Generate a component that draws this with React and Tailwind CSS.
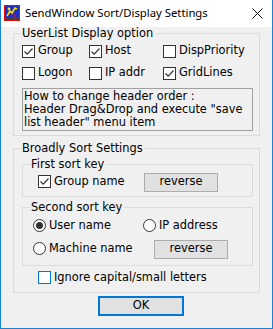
function Check({ checked, focus }) {
  return (
    <span
      className={`w-[13px] h-[13px] shrink-0 border bg-white flex items-center justify-center ${
        focus ? 'border-[#0078d7]' : 'border-[#333333]'
      }`}
    >
      {checked && (
        <svg viewBox="0 0 11 11" className="w-[11px] h-[11px]">
          <path d="M1.5 5.5 L4.2 8.2 L9.5 2.5" stroke="#333" strokeWidth="1.2" fill="none" />
        </svg>
      )}
    </span>
  )
}

function Radio({ checked }) {
  return (
    <span className="w-[13px] h-[13px] shrink-0 rounded-full border border-[#333333] bg-white flex items-center justify-center">
      {checked && <span className="w-[7px] h-[7px] rounded-full bg-[#333333]" />}
    </span>
  )
}

function Option({ label, checked, className = '' }) {
  return (
    <div className={`flex items-center gap-[3px] ${className}`}>
      <Check checked={checked} />
      <span>{label}</span>
    </div>
  )
}

function Button({ children }) {
  return (
    <button className="w-[74px] h-[19px] bg-[#e1e1e1] border border-[#adadad] leading-none">
      {children}
    </button>
  )
}

function AppIcon() {
  return (
    <svg viewBox="0 0 16 16" className="w-4 h-4 shrink-0">
      <rect x="0.5" y="0.5" width="15" height="15" fill="#1c2fc8" stroke="#e01010" />
      <rect x="1" y="12" width="14" height="3" fill="#404040" />
      <path d="M3 11 L6 6 L8 8 L11 3 L13 4" stroke="#ffe000" strokeWidth="1.6" fill="none" />
      <circle cx="5" cy="4" r="1.4" fill="#ffe000" />
      <path d="M9 9 L12 12" stroke="#e01010" strokeWidth="1.4" />
    </svg>
  )
}

export default function App() {
  return (
    <div className="w-[273px] h-[329px] bg-[#f0f0f0] border-x border-b border-[#1883d7] flex flex-col font-['DejaVu_Sans',sans-serif] text-[11.4px] text-black">
      <div className="h-[27px] shrink-0 bg-white flex items-start">
        <div className="ml-[3px] mt-[5px]">
          <AppIcon />
        </div>
        <span className="ml-[5px] mt-[6px] text-[11.3px] leading-[14px] font-['Noto_Sans',sans-serif]">
          SendWindow Sort/Display Settings
        </span>
        <svg viewBox="0 0 11 11" className="ml-auto mr-[9px] mt-[8px] w-[11px] h-[11px]">
          <path d="M0.5 0.5 L10.5 10.5 M10.5 0.5 L0.5 10.5" stroke="#111" strokeWidth="1" />
        </svg>
      </div>

      <fieldset className="ml-[12px] w-[247px] border border-[#dcdcdc] pl-[8px] pr-[6px] pb-[4px]">
        <legend className="leading-[13px] pr-[2px]">UserList Display option</legend>
        <div className="grid grid-cols-[67px_74px_1fr]">
          <Option className="h-[22px]" label="Group" checked />
          <Option className="h-[22px]" label="Host" checked />
          <Option className="h-[22px]" label="DispPriority" />
          <Option className="h-[22px]" label="Logon" />
          <Option className="h-[22px]" label="IP addr" />
          <Option className="h-[22px]" label="GridLines" checked />
        </div>
        <div className="mt-[4px] h-[43px] border border-[#a0a0a0] pl-[1px] pt-[1px] leading-[13px] whitespace-nowrap">
          How to change header order :<br />
          Header Drag&amp;Drop and execute "save<br />
          list header" menu item
        </div>
      </fieldset>

      <fieldset className="mt-[6px] ml-[12px] w-[247px] border border-[#dcdcdc] pl-[8px] pr-[6px] pb-[3px]">
        <legend className="leading-[13px] pr-[2px]">Broadly Sort Settings</legend>

        <fieldset className="mt-[3px] w-[231px] border border-[#dcdcdc] pl-[8px] pb-[3px]">
          <legend className="leading-[13px] pr-[2px]">First sort key</legend>
          <div className="h-[22px] flex items-center">
            <Option className="ml-[7px] w-[106px]" label="Group name" checked />
            <Button>reverse</Button>
          </div>
        </fieldset>

        <fieldset className="mt-[4px] w-[231px] border border-[#dcdcdc] pl-[8px] pb-[4px]">
          <legend className="leading-[13px] pr-[2px]">Second sort key</legend>
          <div className="h-[23px] flex items-center">
            <div className="ml-[2px] w-[110px] flex items-center gap-[3px]">
              <Radio checked />
              <span>User name</span>
            </div>
            <div className="flex items-center gap-[3px]">
              <Radio />
              <span>IP address</span>
            </div>
          </div>
          <div className="h-[24px] flex items-center">
            <div className="ml-[2px] w-[121px] flex items-center gap-[3px]">
              <Radio />
              <span>Machine name</span>
            </div>
            <Button>reverse</Button>
          </div>
        </fieldset>

        <div className="h-[23px] flex items-center ml-[16px] gap-[3px]">
          <Check focus />
          <span>Ignore capital/small letters</span>
        </div>
      </fieldset>

      <button className="mt-[3px] ml-[97px] w-[86px] h-[20px] border-2 border-[#0078d7] bg-[#e1e1e1] leading-none">
        OK
      </button>
    </div>
  )
}
